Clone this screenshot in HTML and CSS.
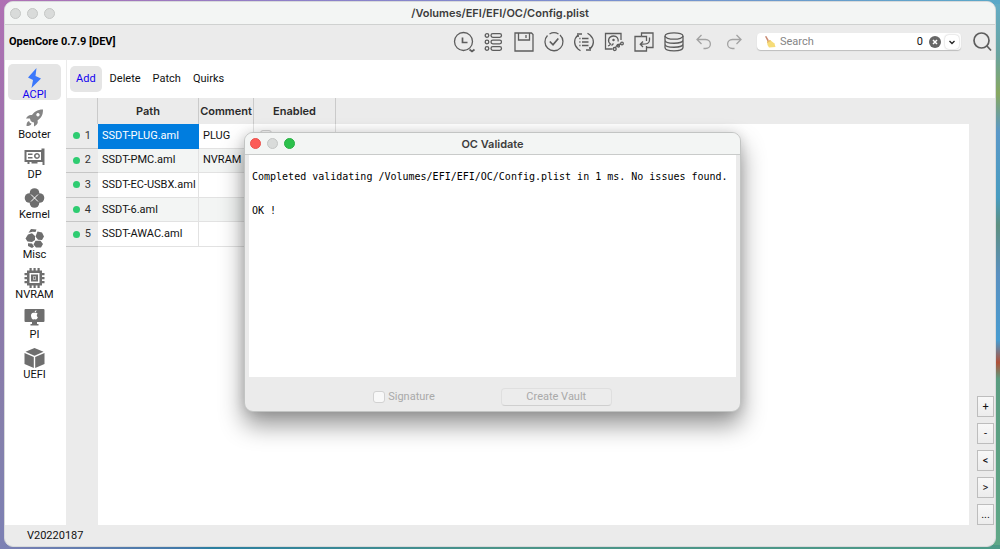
FILE: index.html
```html
<!DOCTYPE html>
<html lang="en">
<head>
<meta charset="utf-8">
<title>/Volumes/EFI/EFI/OC/Config.plist</title>
<link rel="stylesheet" href="styles.css">
</head>
<body>
<main class="window">
  <header class="titlebar">
    <div class="lights"><span class="light"></span><span class="light"></span><span class="light"></span></div>
    <h1 class="window-title">/Volumes/EFI/EFI/OC/Config.plist</h1>
  </header>

  <div class="toolbar">
    <strong class="version">OpenCore 0.7.9 [DEV]</strong>
    <div class="tools">
      <button class="tool" aria-label="Recent files"><svg viewBox="0 0 20 20"><circle cx="9.500" cy="9.500" r="9"/><path class="thick" d="M8.500 5.500V10.500H13.500"/><path class="thick" d="M15.500 17.500L18 19.500L20.500 17.500"/></svg></button>
      <button class="tool" aria-label="List"><svg viewBox="0 0 20 20"><circle cx="3" cy="3.500" r="1.800"/><circle cx="3" cy="10" r="1.800"/><circle cx="3" cy="16.500" r="1.800"/><rect x="7" y="1.700" width="10.500" height="3.600" rx="1.800"/><rect x="7" y="8.200" width="10.500" height="3.600" rx="1.800"/><rect x="7" y="14.700" width="10.500" height="3.600" rx="1.800"/></svg></button>
      <button class="tool" aria-label="Save"><svg viewBox="0 0 20 20"><path d="M1 1H17.500L19 2.500V19H1Z"/><path d="M4.500 1V8H15.500V1M12 3V6"/></svg></button>
      <button class="tool" aria-label="Validate"><svg viewBox="0 0 20 20"><path d="M3.500 3.500A9 9 0 1 0 16 3.100M5.500 2A9 9 0 0 1 14.500 2"/><path class="thick" d="M5.800 9.500L9 12.800L14.300 6.500"/></svg></button>
      <button class="tool" aria-label="Sync list"><svg viewBox="0 0 20 20"><path d="M4 3C-.5 7-.5 13 4 17L6.500 18.700M16 17C20.500 13 20.500 7 16 3L13.500 1.300"/><path class="thick" d="M3 2H8M17 18H12M4 3V5M16 17V15"/><path class="thick" d="M8 6.500H14.500M8 10H14.500M8 13.500H14.500M5.300 6.500H6.500M5.300 10H6.500M5.300 13.500H6.500"/></svg></button>
      <button class="tool" aria-label="Mount disk"><svg viewBox="0 0 20 20"><path d="M8.500 17H1.500V1.500H17V8"/><path d="M4 14C5.500 13.500 6 13 6.500 12C3 9.500 4.500 4 9.500 4C13 4 14.500 6.500 14.200 9.500M7.500 13.500L9.500 11.500"/><circle class="solid" cx="9.500" cy="8" r=".6"/><path d="M11.500 15.500L13.500 12.500L17 12"/><circle cx="10.700" cy="17" r="1.500"/><circle cx="18" cy="11.500" r="1.300"/><circle cx="14.500" cy="14" r="1"/></svg></button>
      <button class="tool" aria-label="Import"><svg viewBox="0 0 20 20"><path d="M7.500 4.500V1H19V15.500H12.500M7.500 4.500H1V19H12.500V14"/><path d="M7.500 4.500H12.500V9"/><path d="M15.500 5.500V8C15.500 11 14 12.200 6.500 12.200M9 9.500L6.300 12.200L9 15"/></svg></button>
      <button class="tool" aria-label="Backup"><svg viewBox="0 0 20 20"><ellipse cx="10" cy="4" rx="9" ry="3.200"/><path d="M1 4V15.500C1 20 19 20 19 15.500V4M1 8C1 12.300 19 12.300 19 8M1 12C1 16.300 19 16.300 19 12"/></svg></button>
      <button class="tool faded" aria-label="Undo"><svg viewBox="0 0 20 20"><path d="M7.500 3L3 7.500L7.500 12M3 7.500H11.500C18 7.500 18 16.500 11.500 16.500H9.500"/></svg></button>
      <button class="tool faded" aria-label="Redo"><svg viewBox="0 0 20 20"><path d="M12.500 3L17 7.500L12.500 12M17 7.500H8.500C2 7.500 2 16.500 8.500 16.500H10.500"/></svg></button>
    </div>
    <div class="search">
      <svg class="broom" viewBox="0 0 12 12"><path d="M1 .5L2.300 0L5 4.500L3.500 5.300Z" fill="#c88870"/><path d="M3 5.500L6 4L10.500 7.500L11.500 11L5 11.500L3.500 9Z" fill="#f6dc78"/><path d="M3 5.500L6 4L6.800 5L3.200 7Z" fill="#e8b868"/></svg>
      <input class="search-input" type="text" placeholder="Search" aria-label="Search">
      <span class="count">0</span>
      <button class="clear" aria-label="Clear"><svg viewBox="0 0 12 12"><circle cx="6" cy="6" r="6" fill="#666"/><path d="M4 4L8 8M8 4L4 8" stroke="#fff" stroke-width="1.500"/></svg></button>
      <button class="more" aria-label="Search history"><svg viewBox="0 0 8 8"><path d="M1.500 3L4 5.500L6.500 3" fill="none" stroke="#222" stroke-width="1.300"/></svg></button>
    </div>
    <button class="tool" aria-label="Find"><svg viewBox="0 0 20 20"><circle class="thick" cx="9.500" cy="8.500" r="7.500"/><path class="thick" d="M15 14L19 18.500"/></svg></button>
  </div>

  <div class="body">
    <nav class="sidebar">
      <button class="section active"><svg viewBox="0 0 20 20"><path d="M12 0L3.500 9.500L8.500 12L7 20L16.500 10.500L11 8Z"/></svg>ACPI</button>
      <button class="section"><svg class="light-icon" viewBox="0 0 20 20"><path fill-rule="evenodd" d="M18.500 1.500C12.500 1.500 9.500 4 7.500 7C4.500 6.500 3 8 1.500 10.500L5.500 10.500L6 12.500L7.500 14L9.500 14.500V18.500C12.500 17 14 15 13 12.500C16.500 10 18.500 7.500 18.500 1.500ZM13.500 5A1.700 1.700 0 1 1 13.400 5Z"/><path d="M4.500 13C2.500 13.500 2 15.500 2 18C4.500 18 6.500 17.500 7 15.500L5.500 15Z"/></svg>Booter</button>
      <button class="section"><svg viewBox="0 0 20 20"><path fill-rule="evenodd" d="M0 2H17V.5H20V17H18V14H0ZM2 4V12H16.500V4Z"/><path fill-rule="evenodd" d="M12.500 5A3 3 0 1 1 12.400 5ZM12.500 6.500A1.500 1.500 0 1 0 12.600 6.500Z"/><path d="M3.500 5.500H8V7H3.500ZM3.500 9H8V10.500H3.500ZM3 14H5V16H3ZM7 14H13V15.500H7Z"/></svg>DP</button>
      <button class="section"><svg viewBox="0 0 20 20"><circle cx="10" cy="5" r="4.800"/><circle cx="15" cy="10" r="4.800"/><circle cx="10" cy="15" r="4.800"/><circle cx="5" cy="10" r="4.800"/><path d="M6.500 6.500L13.500 13.500M13.500 6.500L6.500 13.500" stroke="#fff" stroke-width="1"/></svg>Kernel</button>
      <button class="section"><svg viewBox="0 0 20 20"><path d="M3.500 6.500L7.500 5.300L10.500 8V12L7.500 14L3 13.500L1 10.500ZM13 3.500L17.500 4.500L19.500 8.500L17.500 12L13.500 11.800L11 8.500ZM11 12.800L16 12.800L18.500 16L16.500 19.500H11.500L9 16.500Z"/><path d="M4 4.800L6.500 1L12 1.500L11 4L8 3.800ZM3.500 15.300L7.500 15.500L9.500 18.500L7.500 20L3.500 18Z"/></svg>Misc</button>
      <button class="section"><svg viewBox="0 0 20 20"><path fill-rule="evenodd" d="M2.500 2.500H17.500V17.500H2.500ZM5 5V15H15V5Z"/><path fill-rule="evenodd" d="M6.500 6.500H13.500V13.500H6.500ZM8.500 8.500V11.500H11.500V8.500Z"/><path d="M5 0H7.200V3H5ZM9 0H11.200V3H9ZM13 0H15.200V3H13ZM5 17H7.200V20H5ZM9 17H11.200V20H9ZM13 17H15.200V20H13ZM0 5H3V7.200H0ZM0 9H3V11.200H0ZM0 13H3V15.200H0ZM17 5H20V7.200H17ZM17 9H20V11.200H17ZM17 13H20V15.200H17Z"/><path d="M9 9H11V11H9Z"/></svg>NVRAM</button>
      <button class="section"><svg viewBox="0 0 20 20"><path d="M1 1H19Q20 1 20 2V13Q20 14 19 14H12.500V16H14V17.500H6V16H7.500V14H1Q0 14 0 13V2Q0 1 1 1Z"/><path fill="#fff" d="M10 5C8 4 6.300 5.500 6.500 8C6.700 10 8 12 9 11.500C10 11.200 10.500 11.300 11 11.500C12 11.800 13 10.500 13.400 9.300C12 8.500 12 6.500 13.100 5.800C12.300 4.600 11 4.700 10 5ZM10 4.500C10 3.300 11 2.500 12 2.300C12 3.500 11.200 4.500 10 4.500Z"/></svg>PI</button>
      <button class="section"><svg viewBox="0 0 20 20"><path d="M10 0L19 3.800L10 7.700L1 3.800ZM0 5L9.300 9V20L0 16ZM20 5L10.700 9V20L20 16Z"/></svg>UEFI</button>
    </nav>

    <section class="content">
      <div class="tabs" role="tablist">
        <button class="tab selected" role="tab" aria-selected="true">Add</button>
        <button class="tab" role="tab">Delete</button>
        <button class="tab" role="tab">Patch</button>
        <button class="tab" role="tab">Quirks</button>
      </div>
      <div class="workspace">
        <div class="table-view">
          <table class="entries">
            <colgroup><col class="c-num"><col class="c-path"><col class="c-comment"><col class="c-enabled"><col></colgroup>
            <thead><tr><th></th><th>Path</th><th>Comment</th><th>Enabled</th><th></th></tr></thead>
            <tbody>
              <tr><th><span class="row-head"><span class="dot"></span>1</span></th><td class="current">SSDT-PLUG.aml</td><td>PLUG</td><td><input class="tick" type="checkbox" aria-label="Enabled"></td><td class="rest"></td></tr>
              <tr><th><span class="row-head"><span class="dot"></span>2</span></th><td>SSDT-PMC.aml</td><td>NVRAM</td><td></td><td class="rest"></td></tr>
              <tr><th><span class="row-head"><span class="dot"></span>3</span></th><td>SSDT-EC-USBX.aml</td><td></td><td></td><td class="rest"></td></tr>
              <tr><th><span class="row-head"><span class="dot"></span>4</span></th><td>SSDT-6.aml</td><td></td><td></td><td class="rest"></td></tr>
              <tr><th><span class="row-head"><span class="dot"></span>5</span></th><td>SSDT-AWAC.aml</td><td></td><td></td><td class="rest"></td></tr>
            </tbody>
          </table>
          <div class="blank"></div>
        </div>
        <div class="actions">
          <button class="action">+</button>
          <button class="action">-</button>
          <button class="action">&lt;</button>
          <button class="action">&gt;</button>
          <button class="action">...</button>
        </div>
      </div>
    </section>
  </div>
  <footer class="status">V20220187</footer>
</main>

<section class="dialog" role="dialog" aria-labelledby="dialog-title">
  <header class="titlebar dialog-bar">
    <div class="lights"><span class="light red"></span><span class="light"></span><span class="light green"></span></div>
    <h2 class="window-title" id="dialog-title">OC Validate</h2>
  </header>
  <pre class="output">Completed validating /Volumes/EFI/EFI/OC/Config.plist in 1 ms. No issues found.

OK !</pre>
  <div class="dialog-foot">
    <label class="signature"><input class="tick" type="checkbox" disabled>Signature</label>
    <button class="vault" disabled>Create Vault</button>
  </div>
</section>
</body>
</html>
```
FILE: styles.css
```css
* { box-sizing: border-box; }

body {
  margin: 0;
  height: 100vh;
  padding: 1px 4px 2px;
  overflow: hidden;
  font: 11px/14px Roboto, "Liberation Sans", sans-serif;
  color: #111;
  background:
    linear-gradient(90deg, #7c80b4, #3f79a8 19%, #2b7fa0 21%, #4b9488 50%, #4d9a88) bottom / 100% 4px no-repeat,
    linear-gradient(90deg, #b070b4, #8d80c8 30%, #7a90d0 60%, #5aa8c8) top / 100% 4px no-repeat,
    linear-gradient(#b070b4, #9274a8 40%, #8480ac 80%, #7c80b4) left / 50% 100% no-repeat,
    linear-gradient(#62acc8, #6aa4a0 10%, #88a860 17%, #5a98c8 24%, #489cc0 36%, #5e9080 41%, #5a90c0 50%, #489cd0 62%, #b05038 66%, #5a9c80 69%, #60a888) right / 50% 100% no-repeat;
}

button, input { font: inherit; color: inherit; margin: 0; }
button { border: 0; padding: 0; background: none; }
svg { display: block; }

.window {
  height: 100%;
  display: flex;
  flex-direction: column;
  border-radius: 9px;
  border: 1px solid #d8dadb;
  overflow: hidden;
  background: #ebebeb;
}

.titlebar {
  display: grid;
  grid-template-columns: 1fr auto 1fr;
  align-items: center;
  height: 23px;
  padding: 0 5px;
  background: #f3f5f4;
  border-bottom: 1px solid #cfd1d0;
}
.lights { display: flex; gap: 6px; }
.light { width: 11px; height: 11px; border-radius: 50%; background: #d9dbda; border: 1px solid #c4c6c5; }
.light.red { background: #fc5b57; border-color: #e9504b; }
.light.green { background: #2cc14c; border-color: #27b143; }
.window-title { margin: 0; font: 600 11px/14px Inter, sans-serif; color: #3c3c3c; }

.toolbar {
  display: flex;
  align-items: center;
  gap: 11px;
  height: 35px;
  padding: 0 3px 2px 4px;
}
.version { flex: 1; font-weight: 700; color: #000; }
.tools { display: flex; gap: 10px; margin-right: 2px; }
.tool { width: 20px; height: 20px; }
.tool svg { width: 20px; height: 20px; overflow: visible; fill: none; stroke: #5d5d5d; stroke-width: 1.3; }
.tool .thick { stroke-width: 1.7; }
.tool .solid { fill: #5d5d5d; }
.tool.faded svg { stroke: #a2a2a2; }

.search {
  display: flex;
  align-items: center;
  gap: 4px;
  width: 204px;
  height: 17px;
  padding: 0 2px 0 7px;
  border-radius: 4px;
  background: #fff;
  box-shadow: 0 1px 1px #bdbdbd;
}
.broom { width: 12px; height: 12px; }
.search-input { flex: 1; min-width: 0; padding: 0; border: 0; outline: 0; background: none; }
.search-input::placeholder { color: #858585; opacity: 1; }
.count { padding-right: 2px; }
.clear, .clear svg { width: 12px; height: 12px; }
.more { display: grid; place-items: center; width: 14px; height: 14px; border-radius: 4px; box-shadow: 0 0 2px #b5b5b5; }
.more svg { width: 8px; height: 8px; }

.body { flex: 1; display: flex; min-height: 0; }

.sidebar {
  display: flex;
  flex-direction: column;
  gap: 4px;
  width: 61px;
  padding: 4px 5px 0 3px;
  background: #fff;
}
.section {
  display: flex;
  flex-direction: column;
  align-items: center;
  justify-content: flex-end;
  gap: 2px;
  height: 36px;
  border-radius: 5px;
  line-height: 10px;
}
.section svg { width: 21px; height: 20px; fill: #6e6e6e; }
.section .light-icon { fill: #858585; }
.section.active { background: #e5e5e5; color: #1200f0; }
.section.active svg { fill: #3b78fb; }

.content { flex: 1; display: flex; flex-direction: column; min-width: 0; }
.tabs { display: flex; align-items: center; height: 38px; padding: 0 3px; border-left: 1px solid #ebebeb; background: #fff; }
.tab { height: 26px; padding: 0 6px; border-radius: 5px; }
.tab.selected { margin-right: 2px; background: #e5e5e5; color: #1200f0; }

.workspace { flex: 1; display: flex; min-height: 0; }
.table-view { flex: 1; display: flex; flex-direction: column; }
.entries { width: 100%; height: 149px; table-layout: fixed; border-collapse: separate; border-spacing: 0; }
.c-num { width: 32px; }
.c-path { width: 101px; }
.c-comment { width: 55px; }
.c-enabled { width: 82px; }
.entries thead th { height: 26px; padding: 0; border-right: 1px solid #cacaca; font: 600 11px/14px Inter, sans-serif; color: #2a2a2a; }
.entries thead th:last-child { border-right: 0; }
.entries tbody th { padding: 0 7px 0 4px; border-bottom: 1px solid #c6c6c6; background: #ebebeb; font-weight: 400; color: #333; }
.row-head { display: flex; align-items: center; justify-content: flex-end; gap: 5px; }
.dot { width: 7px; height: 7px; border-radius: 50%; background: #2ecc71; }
.entries td { padding: 0 4px; background: #fff; border-right: 1px solid #e2e2e2; border-bottom: 1px solid #e2e2e2; white-space: nowrap; }
.entries tr:nth-child(even) td { background: #f3f5f4; }
.entries td.current { background: #007ddf; color: #fff; border-color: #007ddf; }
.entries tbody tr td.rest { background: #fff; border: 0; }
.blank { flex: 1; margin-left: 32px; background: #fff; }

.actions { display: flex; flex-direction: column; justify-content: flex-end; align-items: flex-end; gap: 6px; width: 26px; padding-right: 1px; }
.action { width: 17px; height: 21px; border: 1px solid #bdbdbd; background: linear-gradient(#f8f8f8, #ececec); }

.status { height: 21px; padding: 4px 22px; }

.tick { appearance: none; width: 12px; height: 12px; border: 1px solid #d2d2d2; border-radius: 3px; background: #f8f8f8; }
.entries .tick { display: block; margin-left: 2px; }

.dialog {
  position: absolute;
  left: 244px;
  top: 132px;
  width: 497px;
  border: 1px solid #c2c4c3;
  border-radius: 9px;
  overflow: hidden;
  background: #ebebeb;
  box-shadow: 0 13px 24px rgba(0, 0, 0, .42), 0 0 12px rgba(0, 0, 0, .12);
}
.dialog-bar { height: 22px; border-color: #c9cbca; }
.output {
  margin: 0 4px;
  min-height: 222px;
  padding: 13px 3px;
  background: #fff;
  color: #000;
  font: 10px/17px "DejaVu Sans Mono", monospace;
}
.dialog-foot { display: flex; align-items: center; justify-content: center; gap: 66px; height: 34px; padding-top: 6px; color: #a9a9a9; }
.signature { display: flex; align-items: center; gap: 3px; }
.vault { width: 111px; height: 18px; border: 1px solid #dfdfdf; border-bottom-color: #cfcfcf; border-radius: 4px; background: #ececec; }
```
